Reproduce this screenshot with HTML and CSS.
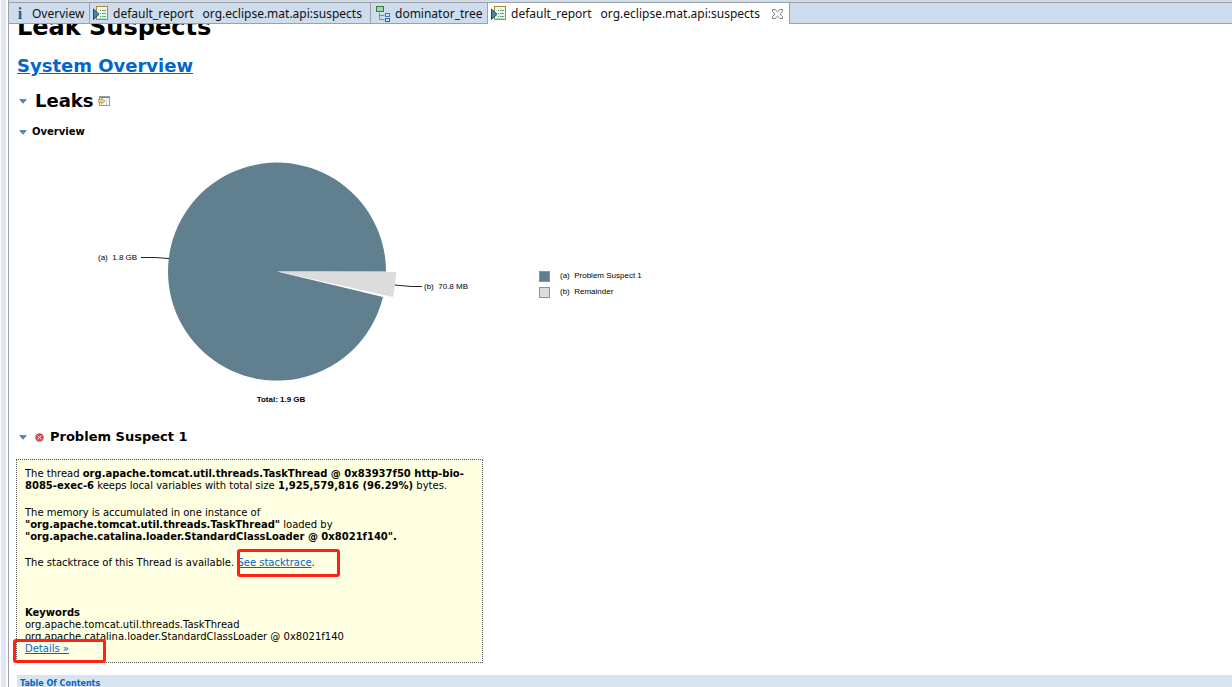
FILE: index.html
```html
<!DOCTYPE html>
<html lang="en">
<head>
<meta charset="utf-8">
<title>Leak Suspects</title>
<link rel="stylesheet" href="styles.css">
</head>
<body>
<svg class="defs" width="0" height="0" aria-hidden="true">
  <symbol id="report" viewBox="0 0 16 16">
    <rect x="3.500" y=".5" width="11" height="13" fill="#eef5ea" stroke="#a88a3c"/>
    <path d="M7 4.500h1M7 7.500h1M7 10.500h1" stroke="#4f8f75"/>
    <path d="M9 4.500h4M9 7.500h4M9 10.500h4" stroke="#58ad78"/>
    <path d="M5 12.500h8" stroke="#b9dcc0"/>
    <path d="M.5 3v10.500L6 8.300z" fill="#3f88a5" stroke="#1b4a70"/>
  </symbol>
  <symbol id="twistie" viewBox="0 0 8 5">
    <path d="M.7.5h6.600L4 4.300z" fill="#5386b5" stroke="#3d6a9c" stroke-width=".6"/>
  </symbol>
</svg>
<div class="gutter"></div>
<div class="editor">
  <nav class="tabs" role="tablist">
    <button class="tab tab-info" role="tab"><span class="info">i</span>Overview</button>
    <button class="tab tab-report" role="tab"><svg class="icon" width="16" height="16"><use href="#report"/></svg><span>default_report</span><span>org.eclipse.mat.api:suspects</span></button>
    <button class="tab tab-tree" role="tab"><svg class="icon" width="16" height="16" viewBox="0 0 16 16">
      <path d="M4.500 7v6.500h5M4.500 9.500h5" fill="none" stroke="#7f8ba0"/>
      <rect x="1.500" y=".5" width="7" height="5" fill="#a5d6a0" stroke="#38764b"/>
      <rect x="10.500" y="7.500" width="4" height="3" fill="#cfe4fa" stroke="#3c78b8"/>
      <rect x="10.500" y="12.500" width="4" height="3" fill="#cfe4fa" stroke="#2c62a8"/>
    </svg>dominator_tree</button>
    <button class="tab tab-report active" role="tab" aria-selected="true"><svg class="icon" width="16" height="16"><use href="#report"/></svg><span>default_report</span><span>org.eclipse.mat.api:suspects</span><svg class="close" width="11" height="10" viewBox="0 0 11 10"><path d="M.5.5h2.500l2.500 2.300L8 .5h2.500V2.500L8 5l2.500 2.500v2H8L5.500 7.200 3 9.500H.5v-2L3 5 .5 2.500z" fill="#fff" stroke="#70747a" stroke-width=".9"/></svg></button>
  </nav>
  <main class="report">
    <h1>Leak Suspects</h1>
    <h2 class="system"><a href="#system">System Overview</a></h2>
    <h2 class="leaks"><svg class="twistie" width="8" height="5"><use href="#twistie"/></svg>Leaks
      <svg class="open" width="12" height="10" viewBox="0 0 12 10"><rect x="1.500" y=".5" width="10" height="9" fill="#f4f7fb" stroke="#8b9db5"/><path d="M2 1.500h9" stroke="#5d83b5"/><path d="M8.500 3v6" stroke="#cbd5df"/><path d="M.5 3.500h3V2L7 5 3.500 8V6.500h-3z" fill="#f6d36b" stroke="#bd8b2d" stroke-width=".7"/></svg>
    </h2>
    <h4><svg class="twistie" width="8" height="5"><use href="#twistie"/></svg>Overview</h4>
    <figure class="chart">
      <svg class="pie" width="500" height="280" viewBox="0 0 500 280" role="img" aria-label="Total: 1.9 GB">
        <path d="M260 131.500L369 131.500A109 109 0 1 0 366 157z" fill="#61808f"/>
        <path d="M261 131.500L379 132A119 119 0 0 1 376 157z" fill="#dcdcdc"/>
        <path d="M124 117.500h14l14 1M378 145l16 1.500h11" fill="none" stroke="#222"/>
        <text x="81" y="120" xml:space="preserve">(a)  1.8 GB</text>
        <text x="407" y="149" xml:space="preserve">(b)  70.8 MB</text>
        <text class="total" x="264" y="262" text-anchor="middle">Total: 1.9 GB</text>
      </svg>
      <ul class="legend">
        <li><span class="swatch suspect"></span>(a)&nbsp; Problem Suspect 1</li>
        <li><span class="swatch remainder"></span>(b)&nbsp; Remainder</li>
      </ul>
    </figure>
    <h3><svg class="twistie" width="8" height="5"><use href="#twistie"/></svg><svg class="error" width="9" height="9" viewBox="0 0 9 9"><circle cx="4.500" cy="4.500" r="4.300" fill="#dc4a55"/><path d="M2.700 2.700l3.600 3.600M6.300 2.700L2.700 6.300" stroke="#fbe3e5" stroke-width="1"/></svg>Problem Suspect 1</h3>
    <section class="suspect-box">
      <p class="lead">The thread <b>org.apache.tomcat.util.threads.TaskThread @ 0x83937f50 http-bio-8085-exec-6</b> keeps local variables with total size <b>1,925,579,816 (96.29%)</b> bytes.</p>
      <p>The memory is accumulated in one instance of <br><b>"org.apache.tomcat.util.threads.TaskThread"</b> loaded by <b>"org.apache.catalina.loader.StandardClassLoader @ 0x8021f140".</b></p>
      <p>The stacktrace of this Thread is available. <span class="marked"><a href="#stack">See stacktrace</a>.<span class="mark mark-stack"></span></span></p>
      <div class="keywords"><b>Keywords</b><br>org.apache.tomcat.util.threads.TaskThread<br>org.apache.catalina.loader.StandardClassLoader @ 0x8021f140<br><span class="marked"><a href="#details">Details »</a><span class="mark mark-details"></span></span></div>
    </section>
    <div class="toc"><a href="#toc">Table Of Contents</a></div>
  </main>
</div>
</body>
</html>
```
FILE: styles.css
```css
* { box-sizing: border-box; }
body {
  margin: 0;
  height: 100vh;
  display: flex;
  overflow: hidden;
  background: #fff;
  color: #000;
  font: 10px/12px "DejaVu Sans", sans-serif;
}
.defs { position: absolute; }
.gutter {
  flex: none;
  width: 8px;
  background: #fff;
  border-left: 1px solid #fff;
}
.gutter::before {
  content: "";
  display: block;
  width: 5px;
  height: 100%;
  background: #dfe5f6;
}
.editor {
  flex: 1;
  min-width: 0;
  display: flex;
  flex-direction: column;
  border-left: 1px solid #a0a0a0;
}
.tabs {
  flex: none;
  display: flex;
  height: 24px;
  padding-top: 3px;
  background: linear-gradient(#cddded 2px, #a0a0a0 2px, #a0a0a0 3px, #cddded 3px);
  border-bottom: 1px solid #a0a0a0;
}
.tab {
  display: flex;
  flex: none;
  align-items: center;
  height: 20px;
  padding: 1px 3px 0;
  border: 0;
  border-right: 1px solid #a0a0a0;
  background: none;
  color: #111;
  font: 12px/20px "Noto Sans", sans-serif;
  white-space: nowrap;
}
.tab span + span { margin-left: 9px; }
.tab .icon { flex: none; margin-right: 4px; }
.tab-info { width: 81px; padding-left: 5px; }
.tab-report { width: 281px; }
.tab-tree { width: 117px; padding-left: 4px; }
.tab.active { width: 302px; height: 21px; background: #fff; }
.tab .info {
  width: 12px;
  margin-right: 6px;
  text-align: center;
  color: #1b6096;
  font: bold 16px/20px "Liberation Serif", serif;
}
.close { flex: none; margin-left: 12px; }
.report {
  flex: 1;
  min-height: 0;
  overflow: hidden;
  padding-left: 8px;
}
h1, h2, h3, h4, p, ul, figure { margin: 0; padding: 0; }
a { color: #0066cc; }
h1 { margin-top: -12px; font-size: 24px; line-height: 30px; }
h2 { font-size: 18px; line-height: 24px; }
.system { margin-top: 12px; }
.leaks { margin-top: 11px; }
h2.leaks, h3, h4 { display: flex; align-items: center; }
.twistie { flex: none; margin: 0 5px 0 2px; }
.leaks .twistie { margin-right: 8px; }
.open { margin-left: 4px; }
h4 { margin-top: 11px; font-size: 10px; line-height: 16px; }
h3 { margin-top: 5px; font-size: 13px; line-height: 24px; }
.error { margin: 0 6px 0 3px; }
.chart {
  display: flex;
  font: 8px/16px "Liberation Sans", sans-serif;
}
.pie { flex: none; }
.total { font-weight: bold; }
.legend { margin: 128px 0 0 22px; list-style: none; }
.legend li { display: flex; align-items: center; }
.swatch {
  width: 11px;
  height: 11px;
  margin-right: 10px;
  border: 1px solid #929292;
}
.suspect { background: #61808f; }
.remainder { background: #dcdcdc; }
.suspect-box {
  width: 467px;
  margin: 10px 0 12px -1px;
  padding: 8px 8px 7px;
  border: 1px dotted #555;
  background: #ffffe1;
}
.suspect-box p { margin-bottom: 14px; }
.suspect-box .lead { margin-bottom: 15px; }
.suspect-box .keywords { margin-top: 38px; }
.marked { position: relative; }
.mark {
  position: absolute;
  border: 3px solid #ff2016;
  border-radius: 3px;
  pointer-events: none;
}
.mark-stack { left: 0; top: -8px; width: 103px; height: 28px; }
.mark-details { left: -12px; top: -4px; width: 93px; height: 24px; }
.toc {
  padding: 3px 3px 1px;
  background: #d8e4ee;
  font-size: 8px;
  font-weight: bold;
}
.toc a { text-decoration: none; }
```
